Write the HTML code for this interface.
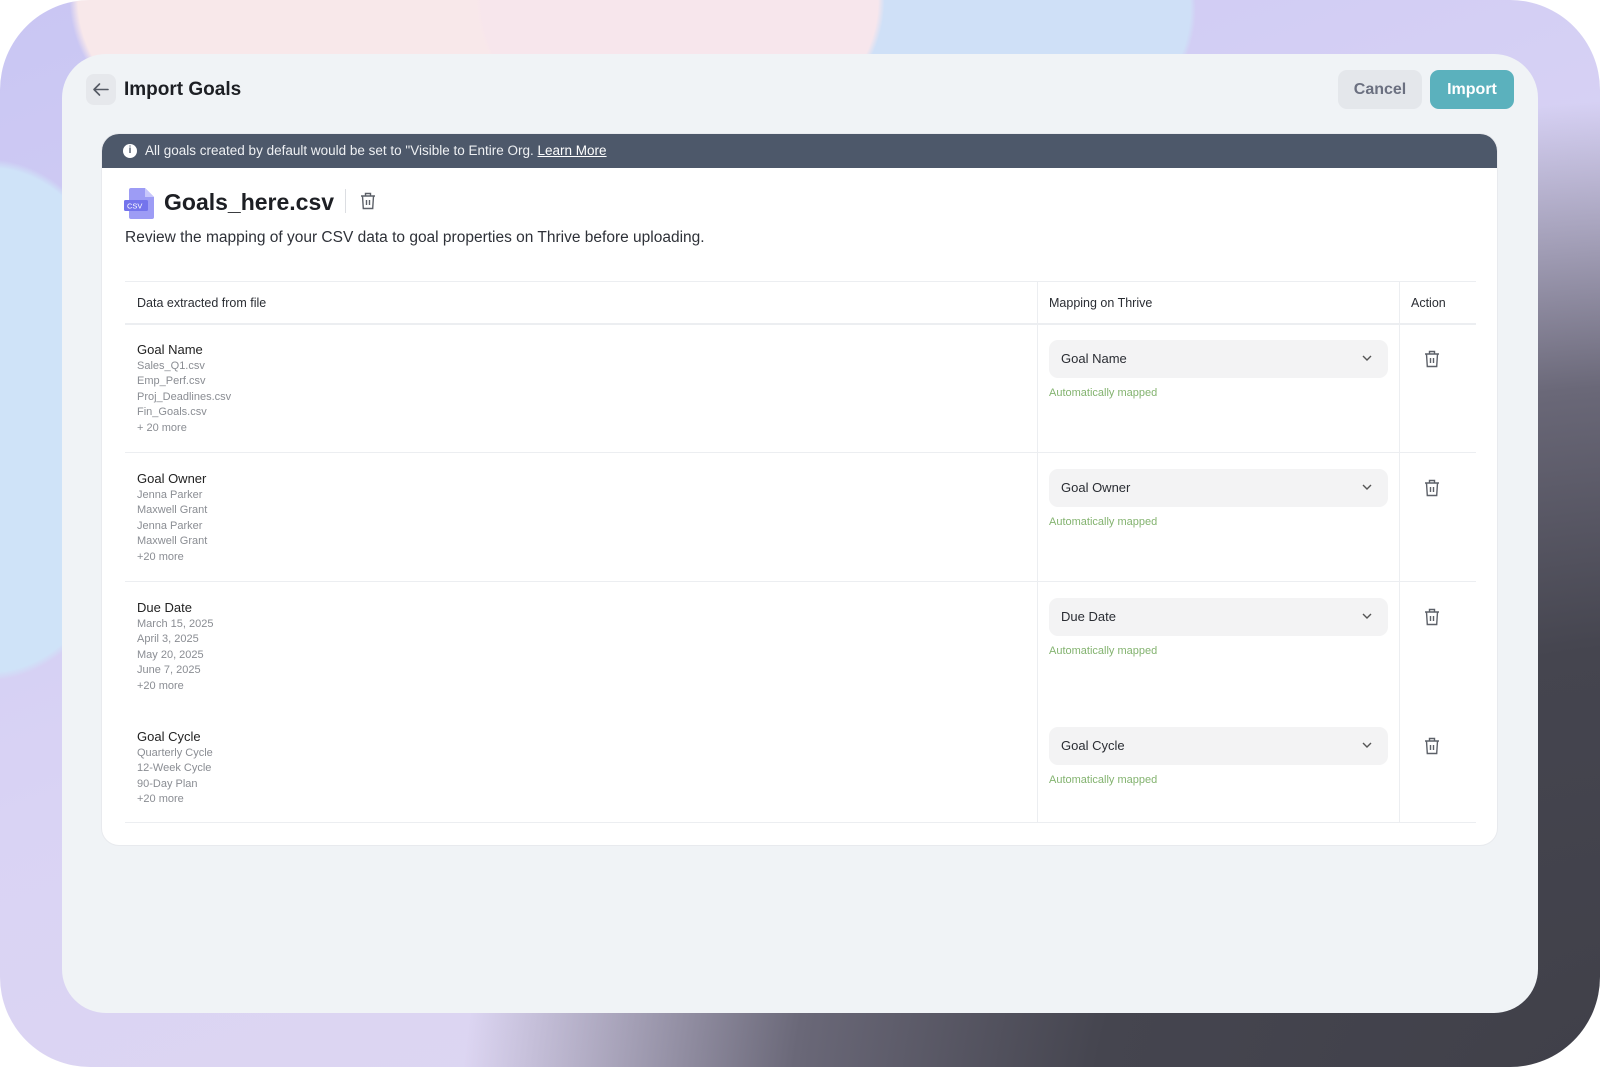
<!DOCTYPE html>
<html><head><meta charset="utf-8"><style>
*{box-sizing:border-box;margin:0;padding:0}
html,body{width:1600px;height:1067px;overflow:hidden;background:#fff;font-family:"Liberation Sans",sans-serif}
.outer{position:absolute;left:0;top:0;width:1600px;height:1067px;border-radius:90px;overflow:hidden;
background:
radial-gradient(ellipse 1500px 1300px at 1660px 1140px,#3f3f48 0%,#45454f 38%,#6a6878 58%,rgba(200,195,225,0) 80%),
radial-gradient(ellipse 330px 260px at 680px 0px,#f7e6ec 60%,transparent 62%),
radial-gradient(ellipse 420px 280px at 330px 0px,#f8e8ea 60%,transparent 62%),
radial-gradient(ellipse 300px 240px at 1010px 10px,#cfe0f7 60%,transparent 62%),
radial-gradient(ellipse 260px 420px at -10px 420px,#cfe3f8 60%,transparent 62%),
linear-gradient(160deg,#c9c6f3 0%,#d9d3f4 50%,#e0d8f0 100%);}
.panel{position:absolute;left:62px;top:54px;width:1476px;height:959px;background:#f0f3f6;border-radius:44px}
.back{position:absolute;left:86px;top:74px;width:30px;height:31px;background:#e6e8ec;border-radius:8px}
.title{position:absolute;left:124px;top:79px;font-size:19px;font-weight:bold;color:#1d1f24}
.btn{position:absolute;top:70px;height:39px;border-radius:9px;font-size:16px;font-weight:bold;text-align:center;line-height:39px}
.cancel{left:1338px;width:84px;background:#e4e7eb;color:#6b7080}
.import{left:1430px;width:84px;background:#5bb1bd;color:#fff}
.card{position:absolute;left:101px;top:133px;width:1397px;height:713px;background:#fff;border-radius:18px;overflow:hidden;border:1px solid #e8eaee}
.banner{position:absolute;left:0;top:0;width:100%;height:34px;background:#4d586a;color:#eef0f3;font-size:13.5px;line-height:34px;padding-left:43px}
.banner u{color:#fff}
.info{position:absolute;left:21px;top:10px;width:14px;height:14px;border-radius:50%;background:#fff;color:#4d586a;font-size:10px;font-weight:bold;line-height:14px;text-align:center}
.fname{position:absolute;left:62px;top:55px;font-size:23px;font-weight:bold;color:#1d1f24}
.desc{position:absolute;left:23px;top:95px;font-size:15.5px;color:#2e3138}
.t{position:absolute;color:#2a2d33}
.hline{position:absolute;left:23px;width:1351px;height:1px;background:#eceef1}
.vline{position:absolute;width:1px;background:#eceef1}
.lab{position:absolute;left:35px;font-size:13px;color:#222}
.sub{position:absolute;left:35px;font-size:11px;color:#8a8d93;line-height:15.4px}
.sel{position:absolute;left:947px;width:339px;height:38px;background:#f3f3f4;border-radius:9px;font-size:13px;color:#2a2d33;line-height:38px;padding-left:12px}
.sel svg{position:absolute;right:16px;top:15px}
.auto{position:absolute;left:947px;font-size:11px;color:#83b36f}
.tr{position:absolute;left:1321px}
</style></head><body>
<div class="outer"></div>
<div class="panel"></div>
<div class="back"><svg width="30" height="31" viewBox="0 0 30 31"><path d="M22 15.5H8M13.5 10L8 15.5l5.5 5.5" stroke="#555a64" stroke-width="1.6" fill="none" stroke-linecap="round" stroke-linejoin="round"/></svg></div>
<div class="title">Import Goals</div>
<div class="btn cancel">Cancel</div>
<div class="btn import">Import</div>
<div class="card">
 <div class="banner"><div class="info">i</div>All goals created by default would be set to "Visible to Entire Org. <u>Learn More</u></div>
 <svg style="position:absolute;left:22px;top:53px" width="32" height="32" viewBox="0 0 32 32"><path d="M7 1h14l9 9v20a2 2 0 0 1-2 2H7a2 2 0 0 1-2-2V3a2 2 0 0 1 2-2z" fill="#9d9cf5"/><path d="M21 1v9h9z" fill="#c8c7fb"/><rect x="0" y="13" width="24" height="11" rx="1.5" fill="#7474ec"/><text x="3" y="21.5" font-size="7.5" fill="#fff" font-family="Liberation Sans">CSV</text></svg>
 <div class="fname">Goals_here.csv</div>
 <div style="position:absolute;left:243px;top:55px;width:1px;height:24px;background:#dcdee2"></div>
 <svg style="position:absolute;left:257px;top:57px" width="18" height="20" viewBox="0 0 18 20"><path d="M2 5h14M6.5 5V2.5h5V5M3.5 5l.8 12.5h9.4L14.5 5M7.5 9v5M10.5 9v5" stroke="#5c6068" stroke-width="1.4" fill="none"/></svg>
 <div class="desc">Review the mapping of your CSV data to goal properties on Thrive before uploading.</div>
 <div class="hline" style="top:147px"></div>
 <div class="t" style="left:35px;top:162px;font-size:12.5px">Data extracted from file</div>
 <div class="t" style="left:947px;top:162px;font-size:12.5px">Mapping on Thrive</div>
 <div class="t" style="left:1309px;top:162px;font-size:12.5px">Action</div>
 <div class="hline" style="top:189px;height:2px"></div>
 <div class="vline" style="left:935px;top:147px;height:542px"></div>
 <div class="vline" style="left:1297px;top:147px;height:542px"></div>
 <div class="hline" style="top:318px"></div>
 <div class="hline" style="top:447px"></div>
 <div class="hline" style="top:688px"></div>

 <div class="lab" style="top:208px">Goal Name</div>
 <div class="sub" style="top:225px">Sales_Q1.csv<br>Emp_Perf.csv<br>Proj_Deadlines.csv<br>Fin_Goals.csv<br>+ 20 more</div>
 <div class="sel" style="top:206px">Goal Name<svg width="10" height="7"><path d="M1 1l4 4 4-4" stroke="#555" stroke-width="1.4" fill="none"/></svg></div>
 <div class="auto" style="top:253px">Automatically mapped</div>

 <div class="lab" style="top:337px">Goal Owner</div>
 <div class="sub" style="top:354px">Jenna Parker<br>Maxwell Grant<br>Jenna Parker<br>Maxwell Grant<br>+20 more</div>
 <div class="sel" style="top:335px">Goal Owner<svg width="10" height="7"><path d="M1 1l4 4 4-4" stroke="#555" stroke-width="1.4" fill="none"/></svg></div>
 <div class="auto" style="top:382px">Automatically mapped</div>

 <div class="lab" style="top:466px">Due Date</div>
 <div class="sub" style="top:483px">March 15, 2025<br>April 3, 2025<br>May 20, 2025<br>June 7, 2025<br>+20 more</div>
 <div class="sel" style="top:464px">Due Date<svg width="10" height="7"><path d="M1 1l4 4 4-4" stroke="#555" stroke-width="1.4" fill="none"/></svg></div>
 <div class="auto" style="top:511px">Automatically mapped</div>

 <div class="lab" style="top:595px">Goal Cycle</div>
 <div class="sub" style="top:612px">Quarterly Cycle<br>12-Week Cycle<br>90-Day Plan<br>+20 more</div>
 <div class="sel" style="top:593px">Goal Cycle<svg width="10" height="7"><path d="M1 1l4 4 4-4" stroke="#555" stroke-width="1.4" fill="none"/></svg></div>
 <div class="auto" style="top:640px">Automatically mapped</div>

 <svg class="tr" style="top:215px" width="18" height="20" viewBox="0 0 18 20"><path d="M2 5h14M6.5 5V2.5h5V5M3.5 5l.8 12.5h9.4L14.5 5M7.5 9v5M10.5 9v5" stroke="#5c6068" stroke-width="1.4" fill="none"/></svg>
 <svg class="tr" style="top:344px" width="18" height="20" viewBox="0 0 18 20"><path d="M2 5h14M6.5 5V2.5h5V5M3.5 5l.8 12.5h9.4L14.5 5M7.5 9v5M10.5 9v5" stroke="#5c6068" stroke-width="1.4" fill="none"/></svg>
 <svg class="tr" style="top:473px" width="18" height="20" viewBox="0 0 18 20"><path d="M2 5h14M6.5 5V2.5h5V5M3.5 5l.8 12.5h9.4L14.5 5M7.5 9v5M10.5 9v5" stroke="#5c6068" stroke-width="1.4" fill="none"/></svg>
 <svg class="tr" style="top:602px" width="18" height="20" viewBox="0 0 18 20"><path d="M2 5h14M6.5 5V2.5h5V5M3.5 5l.8 12.5h9.4L14.5 5M7.5 9v5M10.5 9v5" stroke="#5c6068" stroke-width="1.4" fill="none"/></svg>
</div>
</body></html>
